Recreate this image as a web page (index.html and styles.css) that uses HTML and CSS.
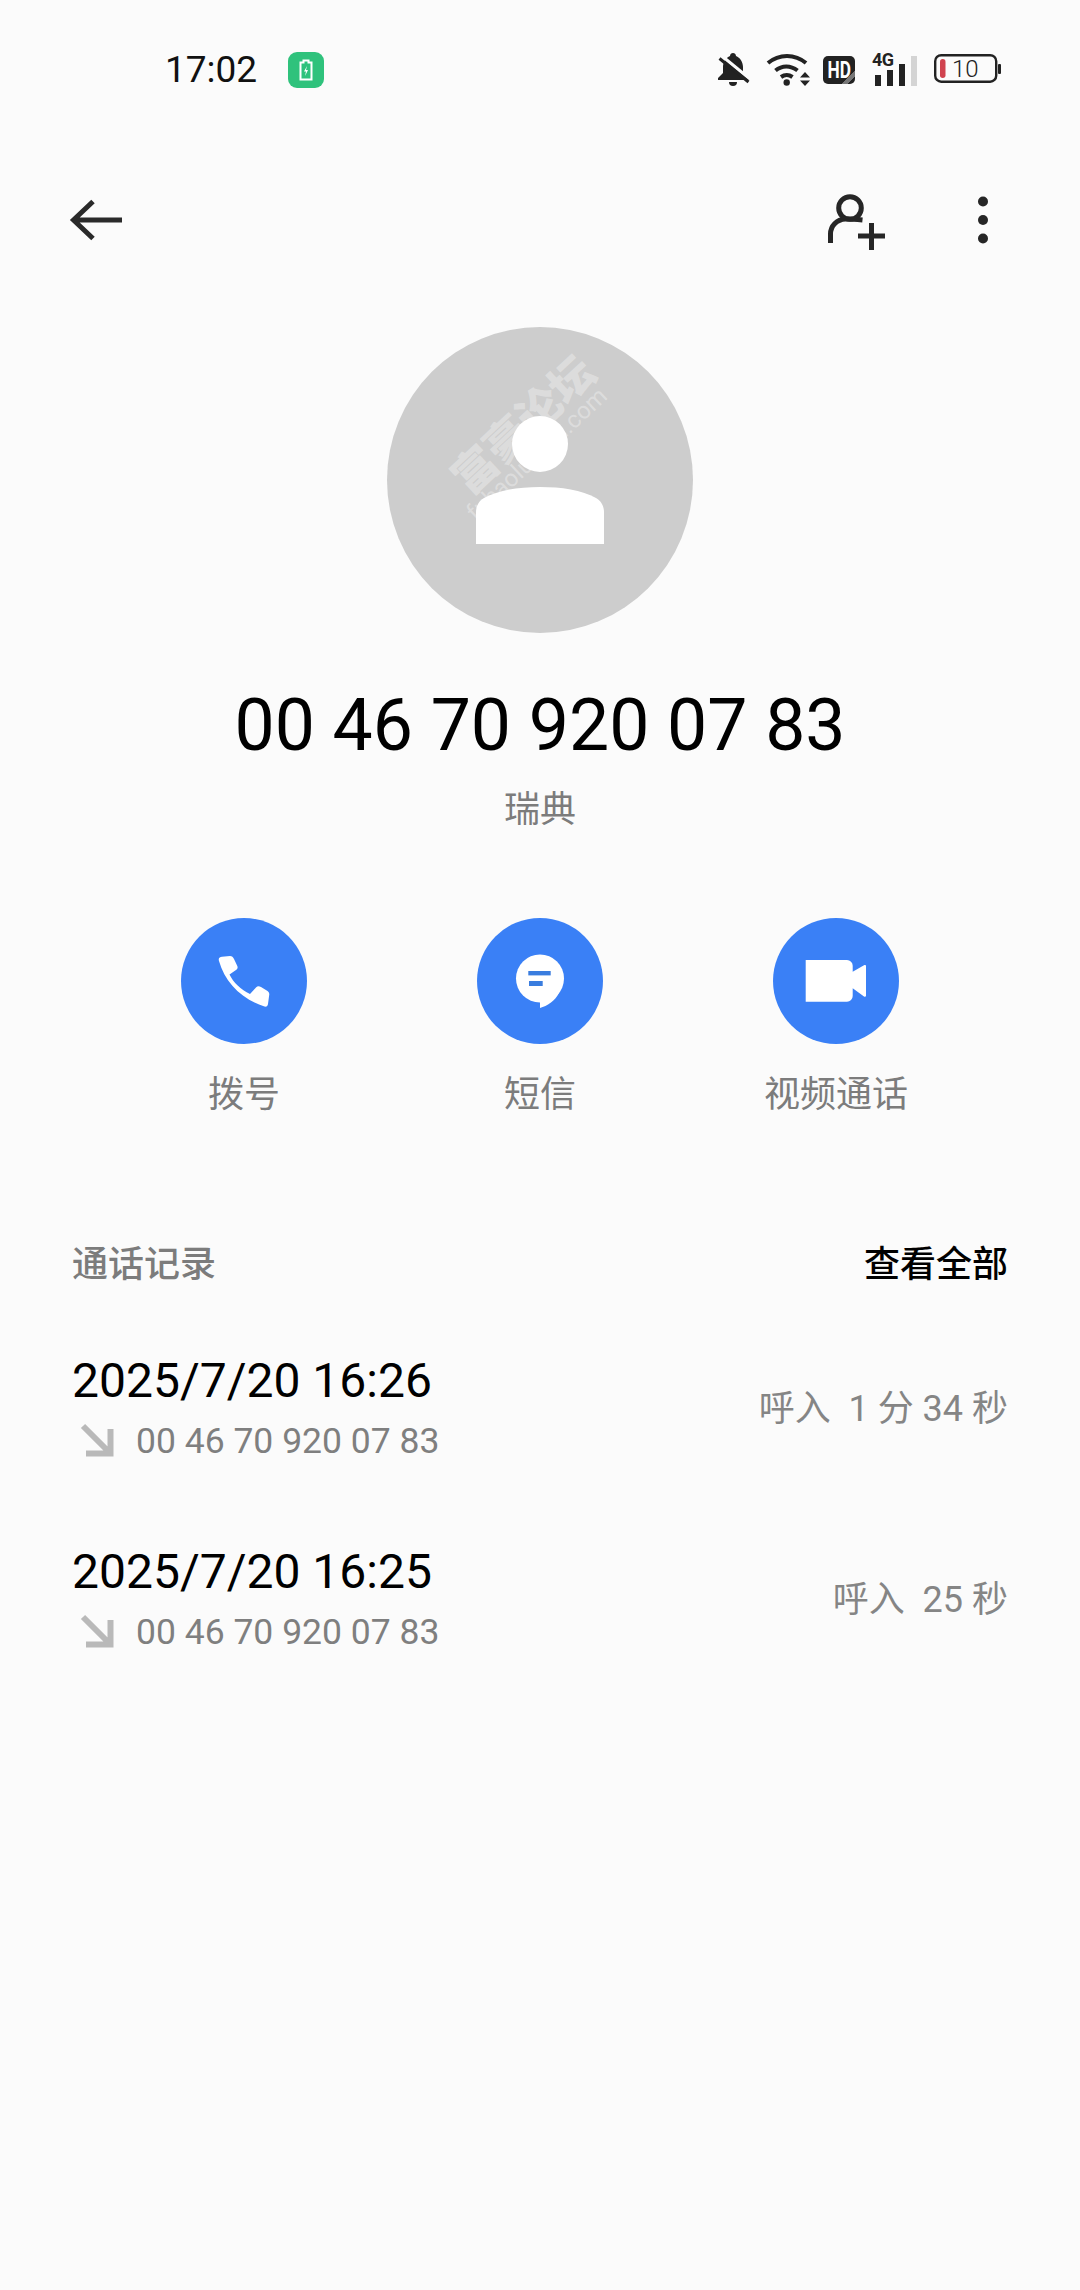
FILE: index.html
```html
<!DOCTYPE html>
<html lang="zh">
<head>
<meta charset="utf-8">
<title>通话详情</title>
<link rel="stylesheet" href="styles.css">
</head>
<body>
<div class="screen">
  <header class="status">
    <div class="status-left">
      <span class="clock">17:02</span>
      <span class="charge">
        <svg viewBox="0 0 36 36" width="36" height="36"><path d="M15.500 8.500h5v2h3v17h-11v-17h3z" fill="none" stroke="#fff" stroke-width="2"/><path d="M19 14l-3 5.500h2l-1 4.500 3-6h-2z" fill="#fff"/></svg>
      </span>
    </div>
    <div class="status-right">
      <svg class="ic" viewBox="0 0 32 36" width="32" height="36"><path d="M15 1c1.500 0 3 1.200 3 3 4 1.500 7 6 7 11v6l6 5v2H0v-2l5-5v-6c0-5 3-9.500 7-11 0-1.800 1.500-3 3-3z" fill="#222"/><path d="M11 30h8a4 4 0 0 1-8 0z" fill="#222"/><path d="M4 4l28 23" stroke="#fbfbfb" stroke-width="3" fill="none"/><path d="M1.500 6.500l29 23.500" stroke="#222" stroke-width="3" fill="none"/></svg>
      <svg class="ic" viewBox="0 0 46 36" width="46" height="36"><g fill="none" stroke="#222" stroke-width="4"><path d="M2 11c11-9.500 27-9.500 38 0"/><path d="M9.500 18.500c6.500-5.500 15-5.500 22 0"/><path d="M15 25c3.500-2.500 8-2.500 11.500 0"/></g><circle cx="20.700" cy="30.500" r="3.200" fill="#222"/><path d="M34 25.500l5-5.500 5 5.500zM34 28.500h10l-5 5.500z" fill="#222"/></svg>
      <span class="hd"><span class="hd-text">HD</span></span>
      <svg class="ic" viewBox="0 0 48 36" width="48" height="36"><text class="fourg" x="0" y="14">4G</text><rect x="3" y="23" width="6" height="11" fill="#222"/><rect x="15" y="18" width="6" height="16" fill="#222"/><rect x="27" y="12" width="6" height="22" fill="#222"/><rect x="39" y="4" width="6" height="30" fill="#d4d4d4"/></svg>
      <svg class="ic" viewBox="0 0 67 36" width="67" height="36"><rect x="1.200" y="3.200" width="61" height="26.500" rx="6" fill="none" stroke="#222" stroke-width="2.400"/><rect x="6" y="7" width="5.500" height="19" rx="2.700" fill="#d0434f"/><text class="batt" x="18" y="25">10</text><rect x="64" y="12" width="3" height="10" rx="1" fill="#222"/></svg>
    </div>
  </header>

  <nav class="toolbar">
    <svg viewBox="0 0 60 60" width="60" height="60"><path d="M57 30H8M28 11.500L8.500 30 28 48.500" fill="none" stroke="#2a2a2a" stroke-width="5"/></svg>
    <div class="toolbar-right">
      <svg viewBox="0 0 60 60" width="60" height="60"><circle cx="25" cy="18" r="11.300" fill="none" stroke="#262626" stroke-width="5"/><path d="M5.500 53V44c0-8 6-14.500 15-15 4-.2 12 .5 17 1" fill="none" stroke="#262626" stroke-width="5"/><path d="M33 46h27M46.500 33v27" fill="none" stroke="#262626" stroke-width="5"/></svg>
      <svg viewBox="0 0 20 60" width="20" height="60"><circle cx="10" cy="11.500" r="5" fill="#262626"/><circle cx="10" cy="30" r="5" fill="#262626"/><circle cx="10" cy="48.500" r="5" fill="#262626"/></svg>
    </div>
  </nav>

  <section class="profile">
    <div class="avatar">
      <span class="wm-main">富豪论坛</span>
      <span class="wm-sub">fuhaoluntan.com</span>
      <svg class="avatar-person" viewBox="0 0 306 306" width="306" height="306"><circle cx="153" cy="117" r="28" fill="#fff"/><path d="M89 217V185c0-6 3-11 8-14 14-8 35-11 56-11s42 3 56 11c5 3 8 8 8 14v32z" fill="#fff"/></svg>
    </div>
    <h1 class="number">00 46 70 920 07 83</h1>
    <p class="location">瑞典</p>
  </section>

  <section class="actions">
    <div class="action">
      <span class="disc"><svg viewBox="0 0 126 126" width="126" height="126"><path d="M38 43c-1-3 1-4 3-4.200l8-.8c2 0 3 1 4 3l3.300 7c.7 2 .2 3-1.300 4l-6.500 4.500c3.500 7.500 11.500 15.500 20.500 19.500l6-6.500c1.500-1.500 3-1.500 5-.5l6.500 4c1.500 1 2 2.500 1.700 4l-1.200 9c-.3 2-1.500 3-3.500 2.500C60 81 44 64 38 43z" fill="#fff"/></svg></span>
      <span class="action-label">拨号</span>
    </div>
    <div class="action">
      <span class="disc"><svg viewBox="0 0 126 126" width="126" height="126"><circle cx="63" cy="60.500" r="24" fill="#fff"/><path d="M63 80v10c7-2 15-7 19-15z" fill="#fff"/><rect x="51.300" y="53" width="22.400" height="4.400" fill="#3a7ddf"/><rect x="52" y="63" width="13.700" height="5" fill="#3a7ddf"/></svg></span>
      <span class="action-label">短信</span>
    </div>
    <div class="action">
      <span class="disc"><svg viewBox="0 0 126 126" width="126" height="126"><path d="M32.700 42H74a5.700 5.700 0 0 1 5.700 5.700V53.700L91 47.300c1.200-.6 2-.2 2 1.200V77.300c0 1.400-.8 1.900-2 1.200L79.700 70.300V78a5.700 5.700 0 0 1-5.700 5.700H32.700z" fill="#fff"/></svg></span>
      <span class="action-label">视频通话</span>
    </div>
  </section>

  <section class="log">
    <div class="log-head">
      <span class="log-title">通话记录</span>
      <span class="log-all">查看全部</span>
    </div>
    <div class="log-row">
      <div>
        <div class="log-time">2025/7/20 16:26</div>
        <div class="log-sub">
          <svg viewBox="0 0 40 40" width="40" height="40"><path d="M5 5l26 26M8 32.500h24.500V8" fill="none" stroke="#b9b9b9" stroke-width="6"/></svg>
          <span>00 46 70 920 07 83</span>
        </div>
      </div>
      <span class="log-info">呼入&nbsp; 1 分 34 秒</span>
    </div>
    <div class="log-row">
      <div>
        <div class="log-time">2025/7/20 16:25</div>
        <div class="log-sub">
          <svg viewBox="0 0 40 40" width="40" height="40"><path d="M5 5l26 26M8 32.500h24.500V8" fill="none" stroke="#b9b9b9" stroke-width="6"/></svg>
          <span>00 46 70 920 07 83</span>
        </div>
      </div>
      <span class="log-info">呼入&nbsp; 25 秒</span>
    </div>
  </section>
</div>
</body>
</html>
```

FILE: styles.css
```css
* { box-sizing: border-box; }
html, body { margin: 0; padding: 0; }
body {
  background: #fbfbfb;
  font-family: Roboto, "Noto Sans CJK SC", sans-serif;
  color: #000;
}
.screen { width: 1080px; height: 2290px; overflow: hidden; }
svg { display: block; flex: none; }

.status {
  display: flex;
  justify-content: space-between;
  padding: 52px 79px 0 165px;
  height: 88px;
}
.status-left { display: flex; align-items: center; height: 36px; gap: 31px; }
.clock { font-size: 37px; line-height: 36px; color: #111; }
.charge { width: 36px; height: 36px; border-radius: 9px; background: #2fc27c; }
.status-right { display: flex; align-items: flex-start; }
.status-right .ic { overflow: visible; }
.status-right .ic:nth-child(2) { margin-left: 16px; }
.hd {
  display: flex; justify-content: center;
  width: 32px; height: 28px; margin: 4px 0 0 11px;
  border-radius: 5px; background: linear-gradient(135deg, #222 78%, #777 78%, #777 88%, #222 88%);
  color: #fff; font-size: 24px; font-weight: 700; line-height: 28px;
}
.hd-text { transform: scaleX(.72); }
.status-right .ic:nth-child(4) { margin-left: 17px; }
.status-right .ic:nth-child(5) { margin-left: 14px; }
.fourg { font-family: Roboto, sans-serif; font-size: 18px; font-weight: 700; fill: #222; letter-spacing: -.5px; }
.batt { font-family: Roboto, sans-serif; font-size: 24px; font-weight: 300; fill: #222; }

.toolbar {
  display: flex;
  justify-content: space-between;
  align-items: center;
  height: 100px;
  margin-top: 82px;
  padding: 0 87px 0 65px;
}
.toolbar-right { display: flex; align-items: center; gap: 88px; }

.profile { display: flex; flex-direction: column; align-items: center; margin-top: 57px; }
.avatar {
  position: relative;
  width: 306px; height: 306px;
  border-radius: 50%;
  background: #cdcdcd;
  overflow: hidden;
}
.avatar-person { position: relative; z-index: 1; }
.wm-main {
  position: absolute; left: 50px; top: 73px; width: 168px;
  font-size: 44px; line-height: 56px; font-weight: 900; white-space: nowrap;
  color: rgba(255, 255, 255, .32);
  transform: rotate(-43deg);
}
.wm-sub {
  position: absolute; left: 59px; top: 112px;
  font-size: 24px; line-height: 30px; white-space: nowrap;
  color: rgba(255, 255, 255, .32);
  transform: rotate(-43deg);
}
.number { margin: 48px 0 0; font-size: 71.5px; line-height: 90px; font-weight: 400; }
.location { margin: 14px 0 0; font-size: 36px; line-height: 50px; color: #7c7c7c; }

.actions { display: grid; grid-template-columns: repeat(3, 296px); justify-content: center; margin-top: 83px; }
.action { display: flex; flex-direction: column; align-items: center; gap: 26px; }
.disc { width: 126px; height: 126px; border-radius: 50%; background: #3a80f6; }
.action-label { font-size: 36px; line-height: 50px; color: #7c7c7c; }

.log { margin-top: 120px; padding: 0 72px; }
.log-head { display: flex; justify-content: space-between; align-items: center; height: 50px; margin-bottom: 61px; }
.log-title { font-size: 36px; line-height: 50px; color: #7c7c7c; font-weight: 500; }
.log-all { font-size: 36px; line-height: 50px; color: #000; font-weight: 500; }
.log-row { display: flex; justify-content: space-between; align-items: center; margin-bottom: 76px; }
.log-time { font-size: 48px; line-height: 60px; }
.log-sub { display: flex; align-items: center; gap: 18px; margin-top: 5px; height: 50px; padding-left: 6px; font-size: 35.5px; line-height: 50px; color: #7f7f7f; }
.log-info { font-size: 36px; line-height: 50px; color: #858585; }
```
